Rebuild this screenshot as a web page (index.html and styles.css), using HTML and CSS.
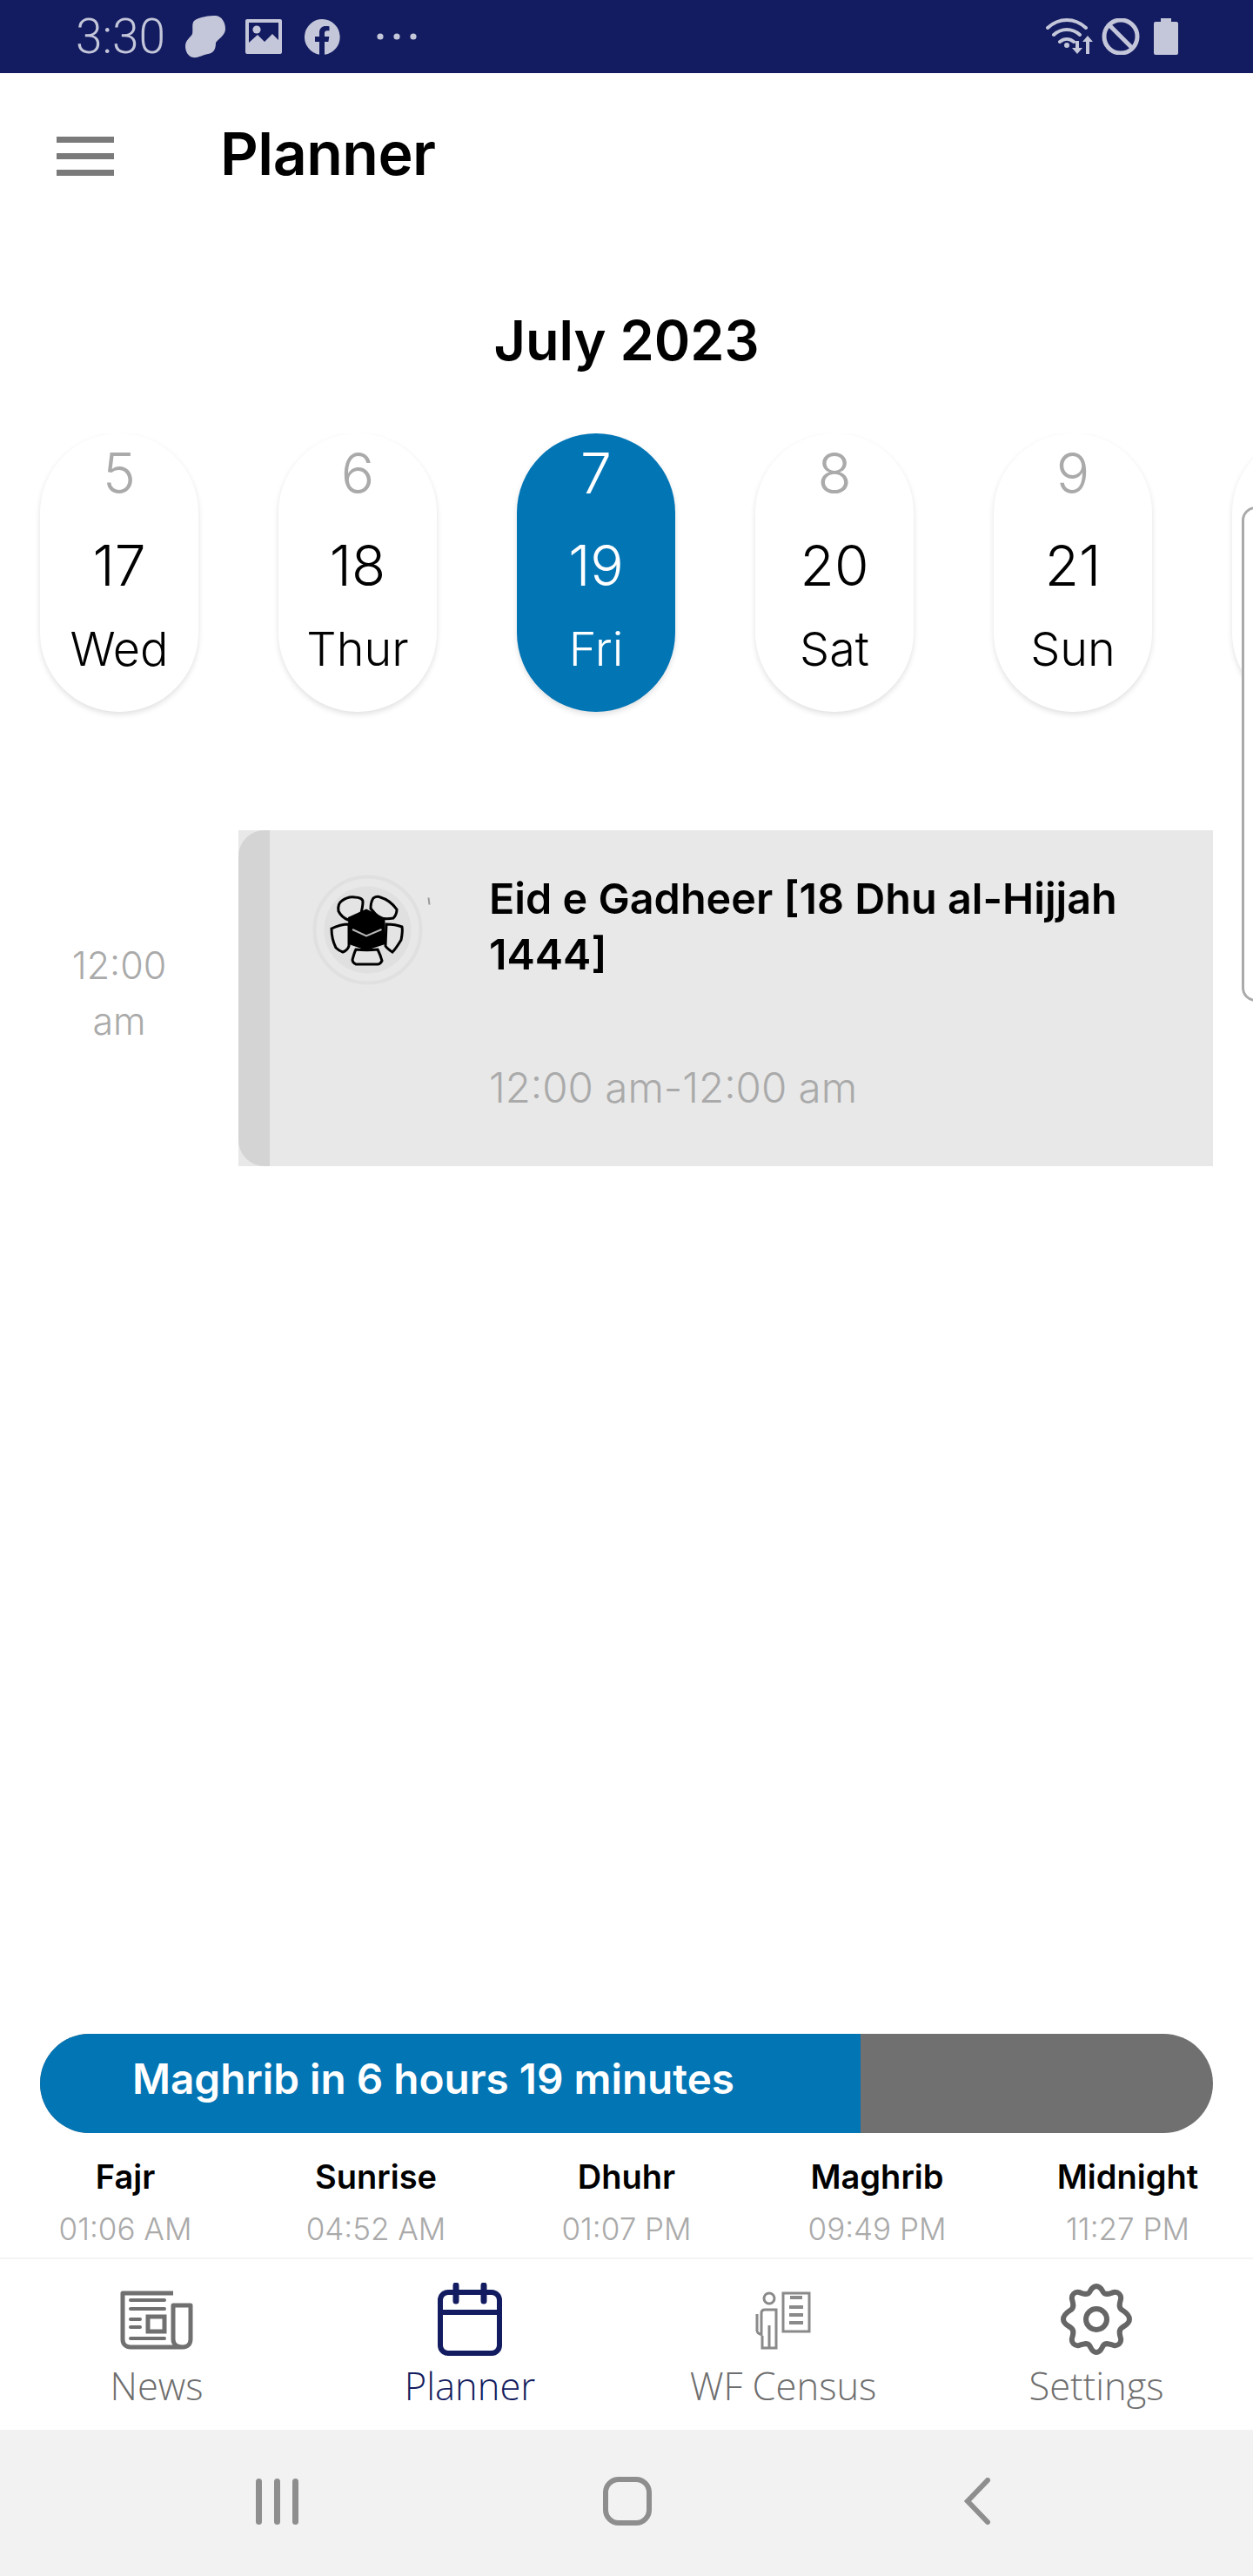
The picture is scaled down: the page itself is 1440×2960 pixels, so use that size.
FILE: index.html
```html
<!DOCTYPE html>
<html lang="en">
<head>
    <meta charset="UTF-8">
    <meta name="viewport" content="width=device-width, initial-scale=1.0">
    <title>Planner</title>
    <link rel="stylesheet" href="styles.css">
</head>
<body>
    <div class="app">
        <!-- Android status bar -->
        <div class="status-bar">
            <span class="clock">3:30</span>
            <svg class="icon-blob" viewBox="0 0 46 49"><path d="M10 6C16 1 28 0 35 0C43 1 46 9 46 15C46 23 38 26 35 31C35 38 33 43 26 44C20 45 14 49 9 48C3 47 0 41 0 35C0 28 6 25 8 21C9 16 7 9 10 6Z"/></svg>
            <svg class="icon-image" viewBox="0 0 42 40"><path fill-rule="evenodd" d="M2 0H40A2 2 0 0 1 42 2V38A2 2 0 0 1 40 40H2A2 2 0 0 1 0 38V2A2 2 0 0 1 2 0ZM4 4V27L14 18L22 26L31 17L38 24V4Z"/><circle cx="13" cy="12" r="4.6"/></svg>
            <svg class="icon-fb" viewBox="0 0 41 41"><path d="M20.5 0A20.5 20.5 0 0 0 17 40.7V26H12V20H17V15.5C17 10.5 20 8 24.400 8C26.500 8 28.500 8.400 28.500 8.400V13.300H26C23.500 13.300 23 14.800 23 16.300V20H28.300L27.400 26H23V40.800A20.500 20.500 0 0 0 20.500 0Z"/></svg>
            <svg class="icon-dots" viewBox="0 0 46 8"><circle cx="4" cy="4" r="3.600"/><circle cx="23" cy="4" r="3.600"/><circle cx="42" cy="4" r="3.600"/></svg>
            <span class="status-spacer"></span>
            <svg class="icon-wifi" viewBox="0 0 55 42">
                <path class="wifi-arc" d="M2 11C15 -1 33 -1 46 11M9 19C18 11 30 11 39 19M16 27C21 23 27 23 32 27"/>
                <circle cx="24" cy="31" r="3"/>
                <path d="M34 26H38V34H42L36 41L30 34H34ZM46 41H50V27H54L48 20L42 27H46Z"/>
            </svg>
            <svg class="icon-block" viewBox="0 0 44 42"><circle cx="22" cy="21" r="19" /><path d="M9 8L35 34"/></svg>
            <svg class="icon-battery" viewBox="0 0 28 42"><path d="M8 0H20V4H26A2 2 0 0 1 28 6V40A2 2 0 0 1 26 42H2A2 2 0 0 1 0 40V6A2 2 0 0 1 2 4H8Z"/></svg>
        </div>

        <header class="top-bar">
            <div class="hamburger"><span></span><span></span><span></span></div>
            <h1>Planner</h1>
        </header>

        <h2 class="month">July 2023</h2>

        <div class="day-strip">
            <div class="day">
                <span class="hijri">5</span><span class="greg">17</span><span class="name">Wed</span>
            </div>
            <div class="day">
                <span class="hijri">6</span><span class="greg">18</span><span class="name">Thur</span>
            </div>
            <div class="day active">
                <span class="hijri">7</span><span class="greg">19</span><span class="name">Fri</span>
            </div>
            <div class="day">
                <span class="hijri">8</span><span class="greg">20</span><span class="name">Sat</span>
            </div>
            <div class="day">
                <span class="hijri">9</span><span class="greg">21</span><span class="name">Sun</span>
            </div>
            <div class="day"></div>
        </div>

        <!-- Panel peeking in from the right edge -->
        <div class="side-panel"></div>

        <div class="timeline">
            <div class="slot-time">12:00<br>am</div>
            <div class="event">
                <div class="event-strip"></div>
                <div class="event-logo">
                    <svg viewBox="0 0 127 127">
                        <circle class="logo-ring" cx="63.500" cy="63.500" r="61"/>
                        <circle class="logo-disc" cx="63.500" cy="63.500" r="50"/>
                        <g class="logo-petals">
                            <path d="M30 42C29 36 31 32 34 30C38 27 44 25 49 26C54 26 58 28 58 31C58 36 57 40 56 44C51 47 46 50 41 52C36 50 32 46 30 42Z"/>
                            <path d="M67 39C67 34 68 30 70 27C73 25 76 25 78 26C85 28 92 33 97 40C97 44 95 48 93 50C88 51 83 51 78 50C74 47 70 43 67 39Z"/>
                            <path d="M22 62C28 59 36 57 42 57V82C41 85 38 88 35 89C32 88 29 86 27 84C24 78 22 70 22 62Z"/>
                            <path d="M85 57C91 57 98 58 103 60C104 65 103 70 102 75C99 80 96 85 92 89C89 87 86 85 84 82Z"/>
                            <path d="M50 86C58 87 67 87 75 86C77 90 79 95 80 99C79 101 77 103 75 103H50C48 102 46 100 46 98C47 94 48 90 50 86Z"/>
                        </g>
                        <path d="M41 49L62 39.500L83.500 50V80L62 87L42 80Z"/>
                        <path class="logo-band" d="M46 63L62 70.500L79.500 63"/>
                        <path class="logo-tick" d="M133.500 26.500L134.500 34.500"/>
                    </svg>
                </div>
                <div class="event-body">
                    <div class="event-title">Eid e Gadheer [18 Dhu al-Hijjah 1444]</div>
                    <div class="event-time">12:00 am-12:00 am</div>
                </div>
            </div>
        </div>

        <div class="prayers">
            <div class="countdown">
                <div class="countdown-fill">Maghrib in 6 hours 19 minutes</div>
            </div>
            <div class="prayer-row">
                <div class="prayer"><b>Fajr</b><span>01:06 AM</span></div>
                <div class="prayer"><b>Sunrise</b><span>04:52 AM</span></div>
                <div class="prayer"><b>Dhuhr</b><span>01:07 PM</span></div>
                <div class="prayer"><b>Maghrib</b><span>09:49 PM</span></div>
                <div class="prayer"><b>Midnight</b><span>11:27 PM</span></div>
            </div>
        </div>

        <nav class="tabs">
            <div class="tab">
                <svg class="tab-news" viewBox="0 0 84 68">
                    <path class="news-line" d="M61 3H3V56C3 62 7 65 12 65H72C78 65 81 61 81 56V17H61V56C61 62 66 65 72 65"/>
                    <path class="news-thin" d="M12 11H51M12 21H51M12 33H23M12 42H23M12 55H51"/>
                    <rect class="news-box" x="32" y="30" width="19" height="17"/>
                </svg>
                <span>News</span>
            </div>
            <div class="tab current">
                <svg class="tab-cal" viewBox="0 0 74 84">
                    <rect class="cal-frame" x="3" y="11" width="68" height="70" rx="9"/>
                    <path class="cal-frame" d="M3 34H71"/>
                    <path class="cal-pin" d="M21 3V21M53 3V21"/>
                </svg>
                <span>Planner</span>
            </div>
            <div class="tab">
                <svg class="tab-census" viewBox="0 0 66 68">
                    <circle class="census-line" cx="17" cy="9" r="6"/>
                    <path class="census-line" d="M8 52V26C8 23 10 22 12 22H25V66H9V52M17 40V66M3 27V46C3 48 5 50 8 50"/>
                    <rect class="census-line" x="33" y="3" width="30" height="44"/>
                    <path class="census-thick" d="M41 8H55M40 19H56M40 28H56M40 37H56"/>
                </svg>
                <span>WF Census</span>
            </div>
            <div class="tab">
                <svg class="tab-gear" viewBox="0 0 84 84">
                    <path class="gear-line" d="M42 4C47 4 48 8 50 11C53 15 58 12 62 11C67 10 71 14 70 19C69 23 67 28 71 31C74 33 80 36 80 42C80 48 74 49 71 52C67 55 69 60 70 64C71 69 67 73 62 72C58 71 53 68 50 72C48 75 47 80 42 80C37 80 36 75 34 72C31 68 26 71 22 72C17 73 13 69 14 64C15 60 17 55 13 52C10 49 4 48 4 42C4 36 10 33 13 31C17 28 15 23 14 19C13 14 17 10 22 11C26 12 31 15 34 11C36 8 37 4 42 4Z"/>
                    <circle class="gear-line" cx="42" cy="42" r="12"/>
                </svg>
                <span>Settings</span>
            </div>
        </nav>

        <div class="system-nav">
            <div class="sys-recent"><span></span><span></span><span></span></div>
            <div class="sys-home"></div>
            <svg class="sys-back" viewBox="0 0 32 54"><path d="M28 3L5 27L28 51"/></svg>
        </div>
    </div>
</body>
</html>
```

FILE: styles.css
```css
/* Global Styles */
* {
    box-sizing: border-box;
    margin: 0;
    padding: 0;
}

body {
    font-family: 'Inter', 'Liberation Sans', sans-serif;
    background-color: #ffffff;
    color: #000000;
}

.app {
    position: relative;
    width: 1440px;
    height: 2960px;
    display: flex;
    flex-direction: column;
    overflow: hidden;
}

/* Status bar */
.status-bar {
    height: 84px;
    flex-shrink: 0;
    display: flex;
    align-items: center;
    padding-left: 87px;
    background-color: #131c60;
    color: #c4c6da;
}

.status-bar svg {
    fill: #c4c6da;
    flex-shrink: 0;
}

.clock {
    font-family: 'Roboto', sans-serif;
    font-weight: 300;
    font-size: 55px;
    line-height: 84px;
    width: 126px;
}

.icon-blob {
    width: 46px;
    height: 49px;
    margin-right: 23px;
}

.icon-image {
    width: 42px;
    height: 40px;
    margin-right: 26px;
}

.icon-fb {
    width: 41px;
    height: 41px;
    margin-right: 42px;
}

.icon-dots {
    width: 46px;
    height: 8px;
}

.status-spacer {
    flex: 1;
}

.icon-wifi {
    width: 55px;
    height: 42px;
    margin-right: 9px;
}

.icon-wifi .wifi-arc {
    fill: none;
    stroke: #c4c6da;
    stroke-width: 4;
    stroke-linecap: round;
}

.icon-block {
    width: 44px;
    height: 42px;
    margin-right: 16px;
}

.status-bar .icon-block circle,
.status-bar .icon-block path {
    fill: none;
    stroke: #c4c6da;
    stroke-width: 5;
}

.icon-battery {
    width: 28px;
    height: 42px;
    margin-right: 86px;
}

/* Top bar */
.top-bar {
    height: 98px;
    margin-top: 43px;
    flex-shrink: 0;
    display: flex;
    align-items: center;
    padding-left: 65px;
}

.hamburger {
    width: 66px;
    margin-top: 7px;
    margin-right: 122px;
    display: flex;
    flex-direction: column;
    gap: 12px;
}

.hamburger span {
    height: 7px;
    background-color: #7a7a7a;
}

.top-bar h1 {
    font-size: 68px;
    font-weight: 600;
    line-height: 76px;
    letter-spacing: -0.5px;
}

/* Month + day pills */
.month {
    margin-top: 128px;
    height: 92px;
    flex-shrink: 0;
    text-align: center;
    font-size: 63px;
    font-weight: 600;
    line-height: 76px;
}

.day-strip {
    margin-top: 53px;
    height: 340px;
    flex-shrink: 0;
    display: flex;
    gap: 92px;
    padding-left: 46px;
    overflow: hidden;
}

.day {
    width: 182px;
    height: 320px;
    flex-shrink: 0;
    display: flex;
    flex-direction: column;
    align-items: center;
    border-radius: 91px;
    background-color: #ffffff;
    box-shadow: 0 3px 6px rgba(0, 0, 0, 0.12);
    color: #000000;
}

.day span {
    display: block;
    text-align: center;
}

.day .hijri {
    margin-top: 7px;
    font-size: 64px;
    font-weight: 300;
    line-height: 78px;
    color: #aaaaaa;
}

.day .greg {
    margin-top: 28px;
    font-size: 64px;
    font-weight: 300;
    line-height: 78px;
}

.day .name {
    margin-top: 26px;
    font-size: 54px;
    font-weight: 300;
    line-height: 62px;
}

.day.active {
    background-color: #0275b5;
}

.day.active span {
    color: #ffffff;
}

.side-panel {
    position: absolute;
    left: 1427px;
    top: 582px;
    width: 60px;
    height: 569px;
    background-color: #ffffff;
    border: 3px solid #aaaaaa;
    border-radius: 16px;
}

/* Timeline */
.timeline {
    margin-top: 116px;
    flex-shrink: 0;
    display: flex;
}

.slot-time {
    width: 274px;
    padding-top: 123px;
    text-align: center;
    font-size: 43px;
    font-weight: 300;
    line-height: 64px;
    color: #aaaaaa;
}

.event {
    width: 1120px;
    height: 386px;
    display: flex;
    background-color: #e8e8e8;
}

.event-strip {
    width: 36px;
    background-color: #d4d4d4;
    border-radius: 30px 0 0 30px;
}

.event-logo {
    width: 252px;
    padding: 51px 0 0 49px;
    flex-shrink: 0;
}

.event-logo svg {
    display: block;
    width: 127px;
    height: 127px;
    overflow: visible;
    fill: #000000;
}

.logo-ring {
    fill: none;
    stroke: #e0e0e0;
    stroke-width: 4;
}

.event-logo .logo-disc {
    fill: #e0e0e0;
}

.event-logo .logo-petals path {
    fill: #e4e4e4;
    stroke: #000000;
    stroke-width: 3;
}

.logo-band {
    fill: none;
    stroke: #b8b8b8;
    stroke-width: 2;
}

.logo-tick {
    stroke: #9a9a9a;
    stroke-width: 2;
}

.event-body {
    padding: 47px 40px 0 0;
}

.event-title {
    font-size: 48.500px;
    font-weight: 600;
    line-height: 64px;
    height: 128px;
    width: 770px;
}

.event-time {
    margin-top: 89px;
    font-size: 47.500px;
    font-weight: 300;
    line-height: 64px;
    color: #aaaaaa;
    white-space: nowrap;
}

/* Prayer times */
.prayers {
    margin-top: auto;
    flex-shrink: 0;
}

.countdown {
    height: 114px;
    margin: 0 46px;
    border-radius: 57px;
    background-color: #707070;
    overflow: hidden;
}

.countdown-fill {
    width: 943px;
    height: 114px;
    padding-left: 106px;
    background-color: #0275b5;
    color: #ffffff;
    font-size: 47.700px;
    font-weight: 600;
    line-height: 104px;
    white-space: nowrap;
}

.prayer-row {
    display: grid;
    grid-template-columns: repeat(5, 288px);
    height: 145px;
    border-bottom: 2px solid #f4f4f4;
}

.prayer {
    display: flex;
    flex-direction: column;
    align-items: center;
    padding-top: 28px;
}

.prayer b {
    font-size: 38px;
    font-weight: 600;
    line-height: 44px;
}

.prayer span {
    margin-top: 16px;
    font-size: 35px;
    font-weight: 300;
    line-height: 44px;
    color: #aaaaaa;
}

/* Bottom tabs */
.tabs {
    height: 196px;
    flex-shrink: 0;
    display: grid;
    grid-template-columns: repeat(4, 360px);
}

.tab {
    position: relative;
    display: flex;
    flex-direction: column;
    align-items: center;
    font-family: 'Open Sans', sans-serif;
    font-weight: 300;
    font-size: 43.500px;
    line-height: 58px;
    color: #6e6e6e;
}

.tab svg {
    display: block;
    fill: none;
    flex-shrink: 0;
}

.tab span {
    position: absolute;
    top: 117px;
    white-space: nowrap;
}

.tab.current {
    color: #131c60;
}

.tab-news {
    width: 84px;
    height: 68px;
    margin-top: 36px;
}

.news-line {
    stroke: #707070;
    stroke-width: 5;
    stroke-linejoin: round;
}

.news-thin {
    stroke: #707070;
    stroke-width: 4;
    stroke-linecap: round;
}

.news-box {
    stroke: #707070;
    stroke-width: 5;
}

.tab-cal {
    width: 74px;
    height: 84px;
    margin-top: 27px;
}

.cal-frame {
    fill: none;
    stroke: #131c60;
    stroke-width: 6;
}

.cal-pin {
    stroke: #131c60;
    stroke-width: 7;
    stroke-linecap: round;
}

.tab-census {
    width: 66px;
    height: 68px;
    margin-top: 36px;
}

.census-line {
    stroke: #8a8a8a;
    stroke-width: 3;
}

.census-thick {
    stroke: #8a8a8a;
    stroke-width: 4;
}

.tab-gear {
    width: 84px;
    height: 84px;
    margin-top: 27px;
}

.gear-line {
    stroke: #666666;
    stroke-width: 6;
}

/* Android nav */
.system-nav {
    height: 168px;
    flex-shrink: 0;
    display: flex;
    align-items: center;
    background-color: #f2f2f2;
    padding: 0 0 4px 294px;
}

.sys-recent {
    width: 49px;
    height: 53px;
    display: flex;
    justify-content: space-between;
}

.sys-recent span {
    width: 7px;
    background-color: #8e8e8e;
    border-radius: 4px;
}

.sys-home {
    width: 56px;
    height: 56px;
    margin-left: 350px;
    border: 6px solid #8e8e8e;
    border-radius: 18px;
}

.sys-back {
    width: 32px;
    height: 54px;
    margin-left: 358px;
    fill: none;
    stroke: #8e8e8e;
    stroke-width: 6;
    stroke-linecap: round;
}
```
